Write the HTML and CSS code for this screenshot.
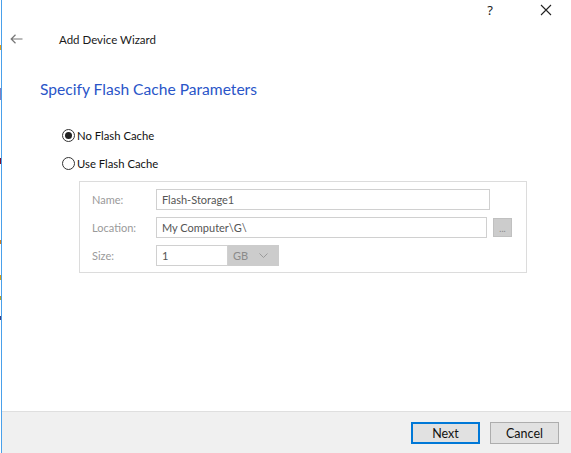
FILE: index.html
```html
<!DOCTYPE html>
<html>
<head>
<meta charset="utf-8">
<link rel="stylesheet" href="styles.css">
</head>
<body>
<div class="desktop">
  <div class="edge"></div>
  <div class="window">
    <div class="titlebar">
      <span class="tb-help">?</span>
      <span class="tb-close">
        <svg width="12" height="12" viewBox="0 0 12 12"><path d="M1 1L11 11M11 1L1 11" stroke="#222" stroke-width="1.1" fill="none"/></svg>
      </span>
    </div>
    <div class="header">
      <svg class="back" width="13" height="10" viewBox="0 0 13 10"><path d="M1 5H12.5M5.5 0.8L1.2 5L5.5 9.2" stroke="#777" stroke-width="1.2" fill="none"/></svg>
      <span class="header-title">Add Device Wizard</span>
    </div>
    <div class="content">
      <h1 class="heading">Specify Flash Cache Parameters</h1>
      <div class="options">
        <label class="radio"><span class="dot checked"></span>No Flash Cache</label>
        <label class="radio"><span class="dot"></span>Use Flash Cache</label>
      </div>
      <div class="group">
        <div class="row">
          <span class="lbl">Name:</span>
          <span class="field name-field">Flash-Storage1</span>
        </div>
        <div class="row">
          <span class="lbl">Location:</span>
          <span class="field loc-field">My Computer\G\</span>
          <span class="browse">...</span>
        </div>
        <div class="row">
          <span class="lbl">Size:</span>
          <span class="field size-field">1</span>
          <span class="unit">GB
            <svg width="9" height="5" viewBox="0 0 9 5"><path d="M0.5 0.5L4.5 4.5L8.5 0.5" stroke="#9a9a9a" stroke-width="1" fill="none"/></svg>
          </span>
        </div>
      </div>
    </div>
    <div class="footer">
      <button class="btn primary">Next</button>
      <button class="btn">Cancel</button>
    </div>
  </div>
</div>
</body>
</html>
```
FILE: styles.css
```css
* { box-sizing: border-box; }
html, body { margin: 0; padding: 0; }
body {
  width: 571px;
  height: 453px;
  overflow: hidden;
  font-family: Lato, "Noto Sans", sans-serif;
  font-size: 12px;
  color: #222;
  background: #fff;
}
.desktop { display: flex; height: 453px; }
.edge {
  width: 1px;
  background: linear-gradient(#fff 0 45px, #e0a020 45px 50px, #fff 50px 88px, #8080c0 88px 100px, #fff 100px 158px, #7a1030 158px 164px, #fff 164px 240px, #d08020 240px 244px, #fff 244px 275px, #d0a020 275px 280px, #fff 280px 296px, #b0a030 296px 300px, #fff 300px 316px, #404080 316px 320px, #fff 320px);
}
.window {
  flex: 1;
  display: flex;
  flex-direction: column;
  border-left: 1px solid #4aa0ea;
  background: #fff;
}
.titlebar {
  height: 20px;
  display: flex;
  align-items: center;
  justify-content: flex-end;
  padding-right: 19px;
  gap: 47px;
}
.tb-help { font-family: "Noto Sans", sans-serif; font-size: 13px; color: #222; }
.tb-close { display: flex; }
.header {
  height: 38px;
  display: flex;
  align-items: center;
  padding-left: 8px;
}
.header-title { margin-left: 36px; font-size: 11.5px; color: #1a1a1a; }
.content { flex: 1; padding-left: 38px; }
.heading {
  margin: 16px 0 0 0;
  font-weight: normal;
  font-size: 15.6px;
  color: #2a55c8;
  line-height: 30px;
}
.options { margin-top: 21px; padding-left: 22px; display: flex; flex-direction: column; gap: 8px; }
.radio { display: flex; align-items: center; height: 20px; font-size: 11.3px; color: #111; }
.dot {
  width: 13px; height: 13px;
  border: 1px solid #333;
  border-radius: 50%;
  margin-right: 2px;
  display: flex; align-items: center; justify-content: center;
  background: #fff;
}
.dot.checked::after {
  content: "";
  width: 7px; height: 7px; border-radius: 50%; background: #222;
}
.group {
  margin: 8px 0 0 39px;
  width: 448px;
  height: 92px;
  border: 1px solid #dcdcdc;
  padding: 7px 0 0 12px;
  display: flex;
  flex-direction: column;
  gap: 8px;
}
.row { display: flex; align-items: center; height: 20px; }
.lbl { width: 64px; color: #9a9a9a; font-size: 11px; }
.field {
  height: 21px;
  border: 1px solid #d0d0d0;
  padding-left: 5px;
  display: flex; align-items: center;
  color: #555; font-size: 11px;
  background: #fff;
}
.name-field { width: 334px; }
.loc-field { width: 331px; }
.browse {
  margin-left: 6px;
  width: 19px; height: 19px;
  background: #cccccc;
  border: 1px solid #c0c0c0;
  color: #888; font-size: 9px;
  display: flex; align-items: flex-end; justify-content: center;
  padding-bottom: 3px; line-height: 9px;
}
.size-field { width: 72px; }
.unit {
  width: 51px; height: 21px;
  background: #cccccc;
  display: flex; align-items: center; justify-content: space-between;
  padding: 0 11px 0 5px;
  color: #8a8a8a; font-size: 11px;
}
.footer {
  height: 42px;
  background: #f0f0f0;
  border-top: 1px solid #dfdfdf;
  display: flex;
  justify-content: flex-end;
  align-items: center;
  padding-right: 12px;
  gap: 10px;
}
.btn {
  width: 69px; height: 22px;
  font-family: inherit; font-size: 12.5px;
  background: #e1e1e1;
  border: 1px solid #adadad;
  color: #111;
  padding: 0;
  margin-top: 1px;
}
.btn.primary { border: 2px solid #0078d7; }
```
